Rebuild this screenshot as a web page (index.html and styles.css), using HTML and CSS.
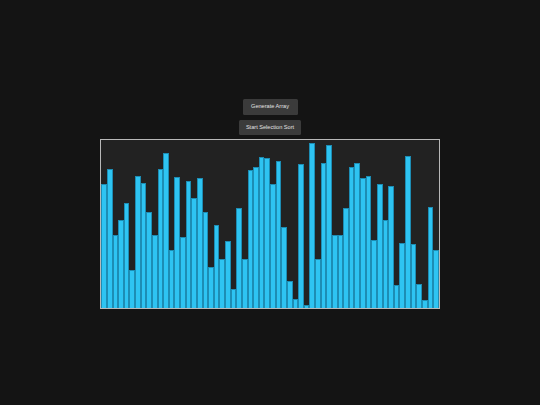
FILE: index.html
```html
<!DOCTYPE html>
<html>
<head>
<meta charset="utf-8">
<link rel="stylesheet" href="styles.css">
</head>
<body>
<main class="app">
  <button class="btn btn-generate">Generate Array</button>
  <button class="btn btn-sort">Start Selection Sort</button>
  <div class="chart">
    <div class="bar" style="height:124px"></div>
    <div class="bar" style="height:139px"></div>
    <div class="bar" style="height:73px"></div>
    <div class="bar" style="height:88px"></div>
    <div class="bar" style="height:105px"></div>
    <div class="bar" style="height:38px"></div>
    <div class="bar" style="height:132px"></div>
    <div class="bar" style="height:125px"></div>
    <div class="bar" style="height:96px"></div>
    <div class="bar" style="height:73px"></div>
    <div class="bar" style="height:139px"></div>
    <div class="bar" style="height:155px"></div>
    <div class="bar" style="height:58px"></div>
    <div class="bar" style="height:131px"></div>
    <div class="bar" style="height:71px"></div>
    <div class="bar" style="height:127px"></div>
    <div class="bar" style="height:110px"></div>
    <div class="bar" style="height:130px"></div>
    <div class="bar" style="height:96px"></div>
    <div class="bar" style="height:41px"></div>
    <div class="bar" style="height:83px"></div>
    <div class="bar" style="height:49px"></div>
    <div class="bar" style="height:67px"></div>
    <div class="bar" style="height:19px"></div>
    <div class="bar" style="height:100px"></div>
    <div class="bar" style="height:49px"></div>
    <div class="bar" style="height:138px"></div>
    <div class="bar" style="height:141px"></div>
    <div class="bar" style="height:151px"></div>
    <div class="bar" style="height:150px"></div>
    <div class="bar" style="height:124px"></div>
    <div class="bar" style="height:147px"></div>
    <div class="bar" style="height:81px"></div>
    <div class="bar" style="height:27px"></div>
    <div class="bar" style="height:9px"></div>
    <div class="bar" style="height:144px"></div>
    <div class="bar" style="height:3px"></div>
    <div class="bar" style="height:165px"></div>
    <div class="bar" style="height:49px"></div>
    <div class="bar" style="height:145px"></div>
    <div class="bar" style="height:163px"></div>
    <div class="bar" style="height:73px"></div>
    <div class="bar" style="height:73px"></div>
    <div class="bar" style="height:100px"></div>
    <div class="bar" style="height:141px"></div>
    <div class="bar" style="height:145px"></div>
    <div class="bar" style="height:130px"></div>
    <div class="bar" style="height:132px"></div>
    <div class="bar" style="height:68px"></div>
    <div class="bar" style="height:124px"></div>
    <div class="bar" style="height:88px"></div>
    <div class="bar" style="height:122px"></div>
    <div class="bar" style="height:23px"></div>
    <div class="bar" style="height:65px"></div>
    <div class="bar" style="height:152px"></div>
    <div class="bar" style="height:64px"></div>
    <div class="bar" style="height:24px"></div>
    <div class="bar" style="height:8px"></div>
    <div class="bar" style="height:101px"></div>
    <div class="bar" style="height:58px"></div>
  </div>
</main>
</body>
</html>
```

FILE: styles.css
```css
html, body {
  margin: 0;
  padding: 0;
  background: #141414;
  width: 540px;
  height: 405px;
  overflow: hidden;
}

.app {
  display: flex;
  flex-direction: column;
  align-items: center;
  padding-top: 99px;
}

.btn {
  font-family: "Liberation Sans", Arial, sans-serif;
  font-size: 5.6px;
  color: #e2e2e2;
  background: #3b3b3b;
  border: none;
  border-radius: 1.5px;
  height: 15.5px;
  padding: 0;
  line-height: 15.5px;
  margin: 0;
  white-space: nowrap;
  text-align: center;
}

.btn-generate {
  width: 55px;
}

.btn-sort {
  width: 62px;
  margin-top: 5px;
}

.chart {
  margin-top: 3.5px;
  width: 337.5px;
  height: 168px;
  border: 1px solid #b8b8b8;
  background: #222222;
  display: flex;
  align-items: flex-end;
}

.bar {
  flex: 1 1 0;
  box-sizing: border-box;
  background: #2ec4f2;
  border: 1px solid #1d8db4;
  border-bottom: none;
}
```
